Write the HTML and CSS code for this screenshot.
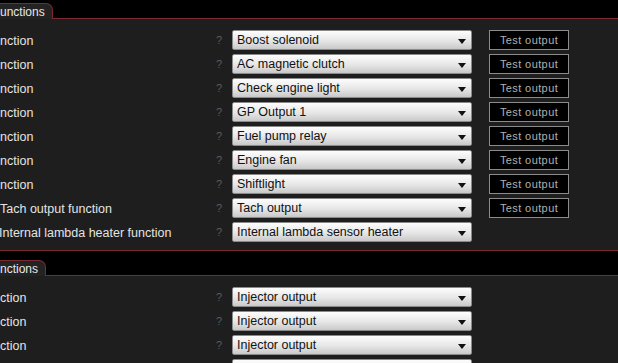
FILE: index.html
```html
<!DOCTYPE html>
<html>
<head>
<title>Output functions</title>
<link rel="stylesheet" href="styles.css">
</head>
<body>

<div class="section-head first">
  <div class="tab">unctions</div>
</div>

<div class="panel">
  <div class="row">
    <div class="label">nction</div><div class="help">?</div>
    <div class="select">Boost solenoid<span class="arrow"></span></div>
    <div class="test">Test output</div>
  </div>
  <div class="row">
    <div class="label">nction</div><div class="help">?</div>
    <div class="select">AC magnetic clutch<span class="arrow"></span></div>
    <div class="test">Test output</div>
  </div>
  <div class="row">
    <div class="label">nction</div><div class="help">?</div>
    <div class="select">Check engine light<span class="arrow"></span></div>
    <div class="test">Test output</div>
  </div>
  <div class="row">
    <div class="label">nction</div><div class="help">?</div>
    <div class="select">GP Output 1<span class="arrow"></span></div>
    <div class="test">Test output</div>
  </div>
  <div class="row">
    <div class="label">nction</div><div class="help">?</div>
    <div class="select">Fuel pump relay<span class="arrow"></span></div>
    <div class="test">Test output</div>
  </div>
  <div class="row">
    <div class="label">nction</div><div class="help">?</div>
    <div class="select">Engine fan<span class="arrow"></span></div>
    <div class="test">Test output</div>
  </div>
  <div class="row">
    <div class="label">nction</div><div class="help">?</div>
    <div class="select">Shiftlight<span class="arrow"></span></div>
    <div class="test">Test output</div>
  </div>
  <div class="row">
    <div class="label">Tach output function</div><div class="help">?</div>
    <div class="select">Tach output<span class="arrow"></span></div>
    <div class="test">Test output</div>
  </div>
  <div class="row">
    <div class="label shifted">Internal lambda heater function</div><div class="help">?</div>
    <div class="select">Internal lambda sensor heater<span class="arrow"></span></div>
  </div>
</div>

<div class="section-head">
  <div class="tab">nctions</div>
</div>

<div class="panel">
  <div class="row">
    <div class="label">ction</div><div class="help">?</div>
    <div class="select">Injector output<span class="arrow"></span></div>
  </div>
  <div class="row">
    <div class="label">ction</div><div class="help">?</div>
    <div class="select">Injector output<span class="arrow"></span></div>
  </div>
  <div class="row">
    <div class="label">ction</div><div class="help">?</div>
    <div class="select">Injector output<span class="arrow"></span></div>
  </div>
  <div class="row">
    <div class="label">ction</div><div class="help">?</div>
    <div class="select">Injector output<span class="arrow"></span></div>
  </div>
</div>

</body>
</html>
```

FILE: styles.css
```css
html, body {
  margin: 0;
  background: #1e1e1e;
  overflow: hidden;
  font-family: "Liberation Sans", Arial, sans-serif;
  font-size: 12.5px;
  color: #e4e4e4;
}

.section-head {
  height: 26px;
  background: #000;
  border-top: 1px solid #7c2a30;
  border-bottom: 1px solid #7c2a30;
  box-sizing: border-box;
  display: flex;
  align-items: flex-end;
}
.section-head.first {
  height: 25px;
  margin-top: -6px;
  border-top: none;
}

.tab {
  height: 15px;
  line-height: 16px;
  margin-bottom: -1px;
  padding: 0 7px 0 0;
  background: #232323;
  border: 1px solid #7c2a30;
  border-left: none;
  border-bottom: none;
  border-top-right-radius: 7px;
  font-size: 12px;
  color: #e8e8e8;
}

.panel {
  padding: 9px 0 6px 0;
}

.row {
  display: flex;
  align-items: center;
  height: 24px;
}

.label {
  width: 212px;
  white-space: nowrap;
  padding-top: 1px;
}
.label.shifted {
  margin-left: -1px;
  width: 213px;
}

.help {
  width: 20px;
  padding-left: 4px;
  box-sizing: border-box;
  color: #5c5c5c;
  font-size: 11px;
}

.select {
  position: relative;
  width: 240px;
  height: 20px;
  line-height: 19px;
  box-sizing: border-box;
  padding-left: 4px;
  border: 1px solid #8a8a8a;
  border-radius: 2px;
  background: linear-gradient(#fdfdfd, #e6e6e6 55%, #c9c9c9);
  color: #111;
  font-size: 12.5px;
}
.arrow {
  position: absolute;
  right: 5px;
  top: 8px;
  border-left: 4px solid transparent;
  border-right: 4px solid transparent;
  border-top: 5px solid #111;
}

.test {
  margin-left: 17px;
  width: 80px;
  height: 20px;
  line-height: 19px;
  box-sizing: border-box;
  border: 1px solid #8c8c8c;
  background: #000;
  color: #b0b0b0;
  font-size: 11px;
  letter-spacing: 0.4px;
  text-align: center;
}
```
